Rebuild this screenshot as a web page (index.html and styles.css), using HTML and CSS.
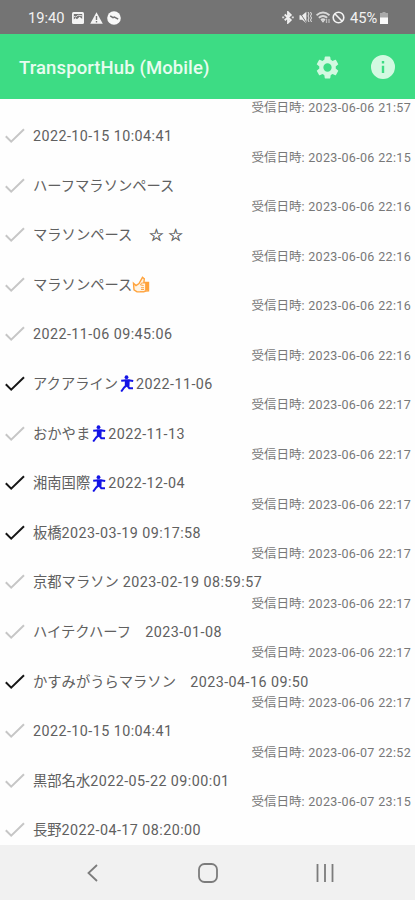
FILE: index.html
```
<!DOCTYPE html>
<html lang="ja">
<head>
    <meta charset="utf-8">
    <title>TransportHub (Mobile)</title>
    <link rel="stylesheet" href="styles.css">
</head>
<body>
    <svg width="0" height="0" class="defs">
        <symbol id="check" viewBox="0 0 20 16"><path d="M.8 8.2 6.2 13.6 19 1.2" fill="none" stroke="currentColor" stroke-width="2"/></symbol>
        <symbol id="runner" viewBox="0 0 14 17">
            <circle cx="6.5" cy="2.2" r="1.9"/>
            <path d="M1.2 5.8 4.5 5.4h5.5l3.2.6M7.2 6v5M6.5 10.5 4.2 12.5 1.2 16.5M7.5 10.8l1.8 2.4h3.7" fill="none" stroke="currentColor" stroke-width="2"/>
            <path d="M4.8 4.6h5l-.4 7H4.8z"/>
        </symbol>
    </svg>
    <div class="screen">
        <div class="status-bar">
            <span class="clock">19:40</span>
            <svg class="st-image" viewBox="0 0 12 12"><rect width="12" height="12" rx="1.5" fill="#f4f4f4"/><path d="M1.8 2h8.4v5L7.6 4.8 5 7.2 3.4 6 1.8 7.6z" fill="#747474"/><path d="M1.8 4.2l2 .8L6 3.2l4.2.6" stroke="#ddd" fill="none"/></svg>
            <svg class="st-alert" viewBox="0 0 13 12"><path d="M6.5.3 12.8 11.7H.2z" fill="#f4f4f4"/><path d="M6.5 4v4M6.5 9v1.5" stroke="#747474" stroke-width="1.4"/></svg>
            <svg class="st-call" viewBox="0 0 14 14"><circle cx="7" cy="7" r="6.8" fill="#f8f8f8"/><path d="M3.2 4.8 6 6.6 7.4 6l3.8 2.2" fill="none" stroke="#747474" stroke-width="1.5"/></svg>
            <span class="spacer"></span>
            <svg class="st-bt" viewBox="0 0 12 13"><path d="M2.7 3.5 8.8 9 6 11.7V1.2L8.8 4 2.7 9.3" fill="none" stroke="#f0f0f0" stroke-width="1.8"/><path d="M.2 6.4h2M9.8 6.4h2" stroke="#ddd" stroke-width="1.8"/></svg>
            <svg class="st-mute" viewBox="0 0 13 13"><path d="M.5 4.3h2.7L7.4.8v11.4L3.2 8.7H.5z" fill="#eee"/><path d="M.5 1.2 7.8 12.2" stroke="#747474" stroke-width="1"/><path d="m9 1 1 2-1 2 1 2-1 2 1 2M11.5 1l1 2-1 2 1 2-1 2 1 2" fill="none" stroke="#e5e5e5"/></svg>
            <svg class="st-wifi" viewBox="0 0 15 13"><path d="M.5 4.2Q7 -1.2 13.5 4.2M2.8 6.7Q7 3.2 11.2 6.7M5 9.1Q7 7.5 9 9.1" fill="none" stroke="#d8d8d8" stroke-width="1.9"/><path d="M7 11.7 5 9.3h4z" fill="#ddd"/><path d="M10.5 8v4M13 8v4" stroke="#bbb" stroke-width="1.3"/></svg>
            <svg class="st-block" viewBox="0 0 13 13"><circle cx="6.5" cy="6.5" r="5.3" fill="none" stroke="#f2f2f2" stroke-width="1.6"/><path d="M2.8 2.8l7.4 7.4" stroke="#f2f2f2" stroke-width="1.6"/></svg>
            <span class="battery">45%</span>
            <svg class="st-battery" viewBox="0 0 8 12"><path d="M2.5 0h3v1H8v5H0V1h2.5z" fill="#aaa"/><path d="M0 5.5h8V12H0z" fill="#fafafa"/></svg>
        </div>
        <header class="app-bar">
            <h1>TransportHub (Mobile)</h1>
            <svg class="gear" viewBox="2 2 20 20"><path d="M19.14 12.94c.04-.3.06-.61.06-.94s-.02-.64-.07-.94l2.03-1.58a.49.49 0 0 0 .12-.61l-1.92-3.32a.49.49 0 0 0-.59-.22l-2.39.96a7 7 0 0 0-1.62-.94l-.36-2.54a.48.48 0 0 0-.48-.41h-3.84a.48.48 0 0 0-.47.41l-.36 2.54a7.3 7.3 0 0 0-1.62.94l-2.39-.96a.49.49 0 0 0-.59.22L2.74 8.87a.48.48 0 0 0 .12.61l2.03 1.58a7 7 0 0 0 0 1.88l-2.03 1.58a.49.49 0 0 0-.12.61l1.92 3.32c.12.22.37.29.59.22l2.39-.96c.5.38 1.03.7 1.62.94l.36 2.54c.05.24.24.41.48.41h3.84c.24 0 .44-.17.47-.41l.36-2.54a7.3 7.3 0 0 0 1.62-.94l2.39.96c.22.08.47 0 .59-.22l1.92-3.32a.49.49 0 0 0-.12-.61zM12 15.6a3.6 3.6 0 1 1 0-7.2 3.6 3.6 0 0 1 0 7.2z"/></svg>
            <svg class="info" viewBox="2 2 20 20"><path d="M12 2a10 10 0 1 0 0 20 10 10 0 0 0 0-20zm1 15h-2v-6h2zm0-8h-2V7h2z"/></svg>
        </header>
        <main class="list">
            <div class="row clipped"><div class="received">受信日時<span>: 2023-06-06 21:57</span></div></div>
            <div class="row">
                <div class="title"><svg class="check"><use href="#check"/></svg><b>2022-10-15 10:04:41</b></div>
                <div class="received">受信日時<span>: 2023-06-06 22:15</span></div>
            </div>
            <div class="row">
                <div class="title"><svg class="check"><use href="#check"/></svg>ハーフマラソンペース</div>
                <div class="received">受信日時<span>: 2023-06-06 22:16</span></div>
            </div>
            <div class="row">
                <div class="title"><svg class="check"><use href="#check"/></svg>マラソンペース　<span class="stars">☆☆</span></div>
                <div class="received">受信日時<span>: 2023-06-06 22:16</span></div>
            </div>
            <div class="row">
                <div class="title"><svg class="check"><use href="#check"/></svg>マラソンペース<svg class="thumb" viewBox="0 0 18 17"><path d="M1.5 7.2 4 9.6l3-2L10.5 1.4l1.8 1.4-.4 3.6h4.6v8.4l-2.8.3-2 .8H5L2 13.8z" fill="#fff4e4" stroke="#ffa33c" stroke-width="1.4"/><path d="M8 15.5h4l1.7-1V7H9.5l-1 2 3.2.5M9 11.7h3M9 13.5h3" fill="none" stroke="#ffa84a" stroke-width="1"/><path d="M13.5 6.3h3v8.2h-3z" fill="#ffa33c"/></svg></div>
                <div class="received">受信日時<span>: 2023-06-06 22:16</span></div>
            </div>
            <div class="row">
                <div class="title"><svg class="check"><use href="#check"/></svg><b>2022-11-06 09:45:06</b></div>
                <div class="received">受信日時<span>: 2023-06-06 22:16</span></div>
            </div>
            <div class="row">
                <div class="title"><svg class="check on"><use href="#check"/></svg>アクアライン<svg class="runner"><use href="#runner"/></svg><b>2022-11-06</b></div>
                <div class="received">受信日時<span>: 2023-06-06 22:17</span></div>
            </div>
            <div class="row">
                <div class="title"><svg class="check"><use href="#check"/></svg>おかやま<svg class="runner"><use href="#runner"/></svg><b>2022-11-13</b></div>
                <div class="received">受信日時<span>: 2023-06-06 22:17</span></div>
            </div>
            <div class="row">
                <div class="title"><svg class="check on"><use href="#check"/></svg>湘南国際<svg class="runner"><use href="#runner"/></svg><b>2022-12-04</b></div>
                <div class="received">受信日時<span>: 2023-06-06 22:17</span></div>
            </div>
            <div class="row">
                <div class="title"><svg class="check on"><use href="#check"/></svg>板橋<b>2023-03-19 09:17:58</b></div>
                <div class="received">受信日時<span>: 2023-06-06 22:17</span></div>
            </div>
            <div class="row">
                <div class="title"><svg class="check"><use href="#check"/></svg>京都マラソン<b> 2023-02-19 08:59:57</b></div>
                <div class="received">受信日時<span>: 2023-06-06 22:17</span></div>
            </div>
            <div class="row">
                <div class="title"><svg class="check"><use href="#check"/></svg>ハイテクハーフ　<b>2023-01-08</b></div>
                <div class="received">受信日時<span>: 2023-06-06 22:17</span></div>
            </div>
            <div class="row">
                <div class="title"><svg class="check on"><use href="#check"/></svg>かすみがうらマラソン　<b>2023-04-16 09:50</b></div>
                <div class="received">受信日時<span>: 2023-06-06 22:17</span></div>
            </div>
            <div class="row">
                <div class="title"><svg class="check"><use href="#check"/></svg><b>2022-10-15 10:04:41</b></div>
                <div class="received">受信日時<span>: 2023-06-07 22:52</span></div>
            </div>
            <div class="row">
                <div class="title"><svg class="check"><use href="#check"/></svg>黒部名水<b>2022-05-22 09:00:01</b></div>
                <div class="received">受信日時<span>: 2023-06-07 23:15</span></div>
            </div>
            <div class="row">
                <div class="title"><svg class="check"><use href="#check"/></svg>長野<b>2022-04-17 08:20:00</b></div>
            </div>
        </main>
        <nav class="nav-bar">
            <svg class="back" viewBox="0 0 11 18"><path d="M10 1 1.5 9l8.5 8"/></svg>
            <svg class="home" viewBox="0 0 20 20"><rect x="1" y="1" width="18" height="18" rx="5.5"/></svg>
            <svg class="recent" viewBox="0 0 18 18"><path d="M1.5 0v18M9 0v18M16.5 0v18"/></svg>
        </nav>
    </div>
</body>
</html>
```
FILE: styles.css
```
* {
    box-sizing: border-box;
}
body {
    margin: 0;
    background: #fefefe;
    font-family: Roboto, "Noto Sans CJK JP", sans-serif;
}
svg {
    flex: none;
    display: block;
}
.defs {
    position: absolute;
}
.screen {
    display: flex;
    flex-direction: column;
    width: 415px;
    height: 900px;
    overflow: hidden;
}
.status-bar {
    display: flex;
    align-items: center;
    height: 34px;
    padding: 1px 27px 0 28px;
    background: #747474;
    color: #f2f2f2;
    font-size: 14.7px;
}
.clock {
    width: 44px;
}
.st-image {
    width: 12px;
    height: 12px;
}
.st-alert {
    width: 13px;
    height: 12px;
    margin-left: 6px;
}
.st-call {
    width: 14px;
    height: 14px;
    margin-left: 4px;
}
.spacer {
    flex: 1;
}
.st-bt {
    width: 12px;
    height: 13px;
}
.st-mute {
    width: 13px;
    height: 13px;
    margin-left: 5px;
}
.st-wifi {
    width: 15px;
    height: 13px;
    margin-left: 4px;
}
.st-block {
    width: 13px;
    height: 13px;
    margin-left: 1px;
}
.battery {
    width: 30px;
    margin-left: 5px;
    white-space: nowrap;
}
.st-battery {
    width: 8px;
    height: 12px;
}
.app-bar {
    display: flex;
    align-items: center;
    height: 65px;
    padding: 1px 20px 0 19px;
    background: #3ddc84;
}
.app-bar h1 {
    flex: 1;
    margin: 2px 0 0;
    color: #e8fcf0;
    font-size: 18.5px;
    font-weight: 500;
    letter-spacing: 0.1px;
    white-space: nowrap;
}
.app-bar svg {
    fill: #d2f9e1;
}
.gear {
    width: 23px;
    height: 23px;
}
.info {
    width: 24px;
    height: 24px;
    margin-left: 32px;
}
.list {
    height: 746px;
    overflow: hidden;
}
.row {
    height: 49.6px;
    padding: 10px 4px 0 5px;
    white-space: nowrap;
}
.row.clipped {
    height: 16.5px;
    padding-top: 0;
}
.title {
    display: flex;
    align-items: center;
    height: 20px;
    line-height: 20px;
    color: #606060;
    font-size: 14.3px;
    white-space: pre;
}
.title b {
    font-weight: 400;
    letter-spacing: 0.45px;
}
.check {
    width: 20px;
    height: 16px;
    margin-right: 8px;
    color: #c6c6c6;
}
.check.on {
    color: #161616;
}
.runner {
    width: 14px;
    height: 17px;
    margin: 0 2px 0 2px;
    color: #1414e6;
    fill: #1414e6;
}
.thumb {
    width: 18px;
    height: 17px;
}
.stars {
    font-family: "DejaVu Sans", sans-serif;
    font-size: 17px;
    letter-spacing: 4px;
    margin-left: 2px;
    -webkit-text-stroke: 0.4px #606060;
}
.received {
    height: 16px;
    line-height: 16px;
    margin-top: 3.5px;
    color: #787878;
    font-size: 12.5px;
    text-align: right;
}
.clipped .received {
    margin-top: 0.5px;
}
.received span {
    font-weight: 400;
    letter-spacing: 0.34px;
}
.nav-bar {
    display: flex;
    align-items: center;
    height: 55px;
    padding: 1px 81px 0 87px;
    background: #f1f1f1;
}
.nav-bar svg {
    fill: none;
    stroke: #7c7c7c;
    stroke-width: 1.8;
}
.back {
    width: 11px;
    height: 18px;
}
.home {
    width: 20px;
    height: 20px;
    margin-left: 100px;
}
.recent {
    width: 18px;
    height: 18px;
    margin-left: 98px;
}
```
